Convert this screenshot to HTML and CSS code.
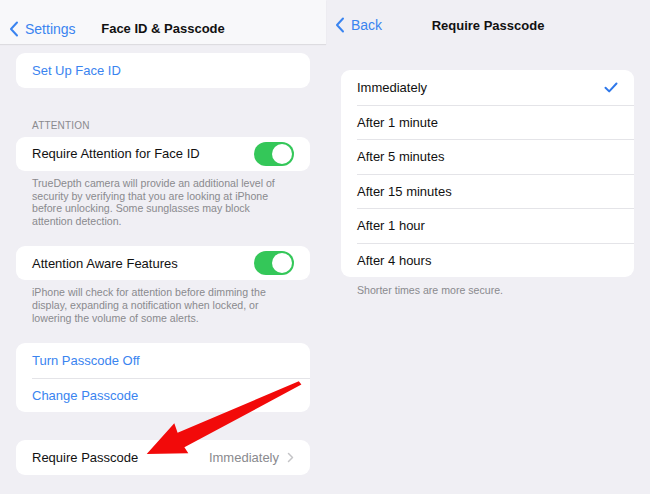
FILE: index.html
```html
<!DOCTYPE html>
<html lang="en">
<head>
  <meta charset="UTF-8">
  <title>Face ID &amp; Passcode - Require Passcode</title>
  <link rel="stylesheet" href="styles.css">
</head>
<body>
  <div class="shot">
    <!-- left screen -->
    <div class="screen left">
      <div class="navbar bar-solid">
        <span class="back">
          <svg class="chev" width="10" height="16" viewBox="0 0 10 16"><path d="M8 1.5 L2 8 L8 14.5" fill="none" stroke="#3a84f0" stroke-width="2" stroke-linecap="round" stroke-linejoin="round"/></svg>
          Settings
        </span>
        <span class="title">Face ID &amp; Passcode</span>
      </div>

      <div class="card first">
        <div class="row link">Set Up Face ID</div>
      </div>

      <div class="section-label">ATTENTION</div>
      <div class="card">
        <div class="row">Require Attention for Face ID <span class="toggle"></span></div>
      </div>
      <p class="note">TrueDepth camera will provide an additional level of security by verifying that you are looking at iPhone before unlocking. Some sunglasses may block attention detection.</p>

      <div class="card gap-sm">
        <div class="row">Attention Aware Features <span class="toggle"></span></div>
      </div>
      <p class="note">iPhone will check for attention before dimming the display, expanding a notification when locked, or lowering the volume of some alerts.</p>

      <div class="card gap-md">
        <div class="row link">Turn Passcode Off</div>
        <div class="row link">Change Passcode</div>
      </div>

      <div class="card gap-lg">
        <div class="row">Require Passcode
          <span class="value">Immediately
            <svg width="7" height="11" viewBox="0 0 7 11"><path d="M1.5 1.5 L5.5 5.5 L1.5 9.5" fill="none" stroke="#c4c4c7" stroke-width="1.5" stroke-linecap="round" stroke-linejoin="round"/></svg>
          </span>
        </div>
      </div>
    </div>

    <!-- right screen -->
    <div class="screen right">
      <div class="navbar">
        <span class="back">
          <svg class="chev" width="10" height="16" viewBox="0 0 10 16"><path d="M8 1.5 L2 8 L8 14.5" fill="none" stroke="#3a84f0" stroke-width="2" stroke-linecap="round" stroke-linejoin="round"/></svg>
          Back
        </span>
        <span class="title">Require Passcode</span>
      </div>

      <div class="card options">
        <div class="row">Immediately
          <svg width="14" height="11" viewBox="0 0 14 11"><path d="M1.5 5.8 L5.2 9.4 L12.5 1.5" fill="none" stroke="#2f78ea" stroke-width="2" stroke-linecap="round" stroke-linejoin="round"/></svg>
        </div>
        <div class="row">After 1 minute</div>
        <div class="row">After 5 minutes</div>
        <div class="row">After 15 minutes</div>
        <div class="row">After 1 hour</div>
        <div class="row">After 4 hours</div>
      </div>
      <p class="note">Shorter times are more secure.</p>
    </div>

    <!-- red pointer arrow drawn over the screenshot -->
    <svg class="arrow" width="170" height="90" viewBox="0 0 170 90">
      <path d="M6.7 76 L34.3 45.3 L37.6 54.8 L158.8 3.2 L161.4 6.6 L44.4 69.2 L48.3 75.3 Z" fill="#f20a0a"/>
    </svg>
  </div>
</body>
</html>
```

FILE: styles.css
```css
* {
  box-sizing: border-box;
}
body {
  margin: 0;
  background: #f0eff4;
  font-family: "Liberation Sans", Arial, sans-serif;
  color: #111;
}
.shot {
  position: relative;
  display: flex;
  width: 650px;
  height: 494px;
  overflow: hidden;
}
.screen {
  display: flex;
  flex-direction: column;
}
.left {
  width: 326px;
  padding: 0 16px;
}
.right {
  width: 324px;
  padding: 0 16px 0 15px;
}
.navbar {
  position: relative;
  display: flex;
  align-items: center;
  justify-content: center;
  height: 44px;
  margin: 0 -16px;
  padding-top: 13px;
}
.right .navbar {
  margin: 0 -16px 0 -15px;
  padding-top: 6px;
}
.bar-solid {
  background: #f8f8fa;
  box-shadow: 0 1px 1px rgba(0, 0, 0, 0.08);
}
.back {
  position: absolute;
  left: 9px;
  top: 50%;
  margin-top: 7px;
  transform: translateY(-50%);
  display: flex;
  align-items: center;
  gap: 6px;
  color: #3a84f0;
  font-size: 14px;
}
.right .back {
  margin-top: 3px;
}
.title {
  font-size: 13px;
  font-weight: bold;
  color: #111;
}
.card {
  background: #fff;
  border-radius: 9px;
  overflow: hidden;
}
.card.first {
  margin-top: 9px;
}
.row {
  display: flex;
  align-items: center;
  justify-content: space-between;
  height: 34.5px;
  margin-left: 16px;
  padding-right: 16px;
  font-size: 13px;
}
.row + .row {
  border-top: 1px solid #e4e4e8;
}
.link {
  color: #3a84f0;
}
.section-label {
  margin: 32px 0 6px 16px;
  font-size: 10px;
  color: #8a8a8e;
  letter-spacing: 0.2px;
}
.toggle {
  position: relative;
  width: 40px;
  height: 24px;
  border-radius: 12px;
  background: #34c759;
}
.toggle::after {
  content: "";
  position: absolute;
  right: 2px;
  top: 2px;
  width: 20px;
  height: 20px;
  border-radius: 50%;
  background: #fff;
}
.note {
  margin: 6px 0 0 16px;
  padding-right: 28px;
  font-size: 10.6px;
  line-height: 12.7px;
  color: #8a8a8e;
}
.gap-sm {
  margin-top: 18px;
}
.gap-md {
  margin-top: 19px;
}
.gap-lg {
  margin-top: 28px;
}
.value {
  display: flex;
  align-items: center;
  gap: 8px;
  color: #8a8a8e;
}
.options {
  margin-top: 26px;
}
.right .note {
  margin-top: 7px;
}
.arrow {
  position: absolute;
  left: 140px;
  top: 378px;
}
```
